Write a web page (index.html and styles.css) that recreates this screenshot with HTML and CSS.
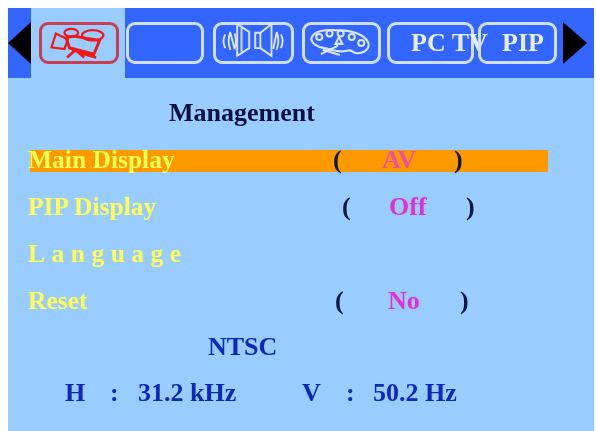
FILE: index.html
```html
<!DOCTYPE html>
<html lang="en">
<head>
    <meta charset="UTF-8">
    <title>Management</title>
    <link rel="stylesheet" href="styles.css">
</head>
<body>
    <div class="osd">
        <div class="tabs">
            <div class="arrow arrow-left"></div>
            <div class="tab-active">
                <div class="box box-red">
                    <svg viewBox="0 0 80 42" class="icon">
                        <path d="M8 26 L13 10 L27 17 L23 28 Z" fill="none" stroke="#f01818" stroke-width="2.6"/>
                        <ellipse cx="31" cy="9" rx="8" ry="4.5" fill="none" stroke="#f01818" stroke-width="2.6"/>
                        <ellipse cx="56" cy="12" rx="12.5" ry="6" fill="none" stroke="#f01818" stroke-width="2.6"/>
                        <path d="M25 15 L33 13 L64 18 L57 35 L29 27 Z" fill="none" stroke="#f01818" stroke-width="3.4"/>
                        <path d="M30 25 L57 32 L54 37 L32 31 Z" fill="#f01818"/>
                        <path d="M35 30 L26 38 M38 31 L46 38 M42 33 L60 38" fill="none" stroke="#f01818" stroke-width="3"/>
                    </svg>
                </div>
            </div>
            <div class="box box-blank"></div>
            <div class="box box-sound">
                <svg viewBox="0 0 80 42" class="icon">
                    <g fill="none" stroke="#dbe7ff" stroke-width="2.2">
                        <path d="M21 -1 L35 8 V27 L21 36 Z M26 4 V31"/>
                        <path d="M42 9 H48 V27 H42 Z"/>
                        <path d="M48 9 L61 -1 V36 L48 27"/>
                        <path d="M7 11 Q3 19 7 27 M13 8 Q9 18 13 29 M13 9 L18 28 M18 10 Q21 19 18 28"/>
                        <path d="M72 11 Q76 19 72 27 M67 8 Q71 18 67 29 M67 9 L63 28"/>
                    </g>
                </svg>
            </div>
            <div class="box box-paint">
                <svg viewBox="0 0 80 42" class="icon">
                    <g fill="none" stroke="#dbe7ff" stroke-width="2.4">
                        <path d="M5 15 C8 7 22 5 32 6 C48 6 65 9 71 20 C74 28 66 33 58 33 C52 33 53 28 46 30 C36 33 28 28 20 27 C12 26 4 21 5 15 Z"/>
                        <circle cx="14" cy="14" r="3.5"/>
                        <circle cx="26" cy="10" r="3.5"/>
                        <circle cx="39" cy="10" r="3.5"/>
                        <circle cx="52" cy="14" r="3.5"/>
                        <circle cx="63" cy="21" r="3.5"/>
                        <path d="M37 14 L41 22 H33 Z"/>
                        <path d="M16 34 L36 24 M18 29 L38 35"/>
                    </g>
                </svg>
            </div>
            <div class="box box-pctv">PC TV</div>
            <div class="box box-pip">PIP</div>
            <div class="arrow arrow-right"></div>
        </div>
        <div class="content">
            <div class="title">Management</div>
            <div class="row row-main">
                <span class="label">Main Display</span>
                <span class="paren">(</span>
                <span class="value value-av">AV</span>
                <span class="paren">)</span>
            </div>
            <div class="row row-pip">
                <span class="label">PIP Display</span>
                <span class="paren">(</span>
                <span class="value">Off</span>
                <span class="paren">)</span>
            </div>
            <div class="row">
                <span class="label label-wide">Language</span>
            </div>
            <div class="row row-reset">
                <span class="label">Reset</span>
                <span class="paren">(</span>
                <span class="value">No</span>
                <span class="paren">)</span>
            </div>
            <div class="row row-ntsc">NTSC</div>
            <div class="row row-freq">
                <span>H</span>
                <span>:</span>
                <span>31.2 kHz</span>
                <span>V</span>
                <span>:</span>
                <span>50.2 Hz</span>
            </div>
        </div>
    </div>
</body>
</html>
```

FILE: styles.css
```css
*{
    padding: 0;
    margin: 0;
    box-sizing: border-box;
}
html,body{
    height: 100%;
    overflow: hidden;
    background-color: #fff;
}
body{
    padding: 8px 2px 0 8px;
    font-family: "Liberation Serif", serif;
    font-weight: bold;
    font-size: 26px;
}
.osd{
    height: 100%;
    filter: blur(0.7px);
    background-color: #99ccff;
}
.tabs{
    display: flex;
    align-items: center;
    height: 70px;
    background-color: #3366ff;
}
.arrow{
    width: 0;
    height: 0;
    border-top: 21px solid transparent;
    border-bottom: 21px solid transparent;
}
.arrow-left{
    width: 23px;
    border-right: 23px solid #000;
}
.arrow-right{
    margin-left: 6px;
    border-left: 24px solid #000;
}
.tab-active{
    align-self: stretch;
    display: flex;
    align-items: center;
    width: 94px;
    padding-left: 8px;
    background-color: #99ccff;
}
.box{
    height: 42px;
    border: 3px solid #cfe0ff;
    border-radius: 9px;
    color: #e6eeff;
    white-space: nowrap;
    line-height: 36px;
}
.icon{
    display: block;
    width: 100%;
    height: 100%;
    overflow: visible;
}
.box-red{
    width: 80px;
    border-color: #c8404f;
}
.box-blank{
    width: 78px;
    margin-left: 1px;
}
.box-sound{
    width: 81px;
    margin-left: 9px;
}
.box-paint{
    width: 79px;
    margin-left: 8px;
}
.box-pctv{
    width: 87px;
    margin-left: 6px;
    padding-left: 21px;
}
.box-pip{
    width: 79px;
    margin-left: 4px;
    padding-left: 21px;
}
.title{
    height: 58px;
    padding: 13px 0 0 161px;
    line-height: 44px;
    color: #0a1040;
}
.row{
    display: grid;
    align-items: center;
    height: 47px;
    padding-left: 20px;
}
.label{
    color: #ffff55;
    font-size: 25.5px;
}
.label-wide{
    letter-spacing: 6.5px;
}
.paren{
    color: #10183c;
}
.value{
    color: #e030dd;
}
.value-av{
    color: #ee4fa0;
}
.row-main{
    position: relative;
    grid-template-columns: 305px 49px 72px auto;
}
.row-main::before{
    content: "";
    position: absolute;
    z-index: -1;
    top: 14px;
    left: 22px;
    width: 518px;
    height: 22px;
    background-color: #ff9900;
}
.content{
    position: relative;
    z-index: 0;
}
.row-pip{
    grid-template-columns: 314px 47px 77px auto;
}
.row-reset{
    grid-template-columns: 307px 53px 72px auto;
}
.row-ntsc{
    padding-left: 200px;
    color: #1028b8;
    margin-top: -1px;
}
.row-freq{
    grid-template-columns: 45px 28px 164px 44px 27px auto;
    padding-left: 57px;
    color: #1028b8;
    margin-top: -1px;
}
```
